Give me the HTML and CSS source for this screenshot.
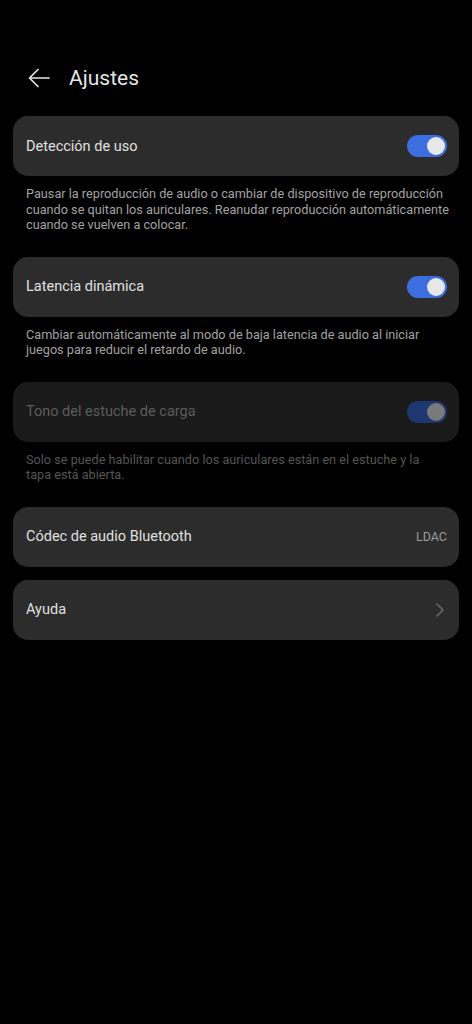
FILE: index.html
```html
<!DOCTYPE html>
<html lang="es">
<head>
  <meta charset="UTF-8">
  <title>Ajustes</title>
  <link rel="stylesheet" href="styles.css">
</head>
<body>
  <div class="page">
    <header class="top">
      <svg class="back" width="24" height="24" viewBox="0 0 24 24">
        <path d="M22 12H2.5M11 3.5L2.5 12L11 20.5" fill="none" stroke="#e6e6e6" stroke-width="1.7" stroke-linecap="round" stroke-linejoin="round"/>
      </svg>
      <h1>Ajustes</h1>
    </header>

    <div class="card">
      <span class="label">Detección de uso</span>
      <span class="switch on"><span class="knob"></span></span>
    </div>
    <p class="hint">Pausar la reproducción de audio o cambiar de dispositivo de reproducción cuando se quitan los auriculares. Reanudar reproducción automáticamente cuando se vuelven a colocar.</p>

    <div class="card">
      <span class="label">Latencia dinámica</span>
      <span class="switch on"><span class="knob"></span></span>
    </div>
    <p class="hint">Cambiar automáticamente al modo de baja latencia de audio al iniciar juegos para reducir el retardo de audio.</p>

    <div class="card disabled">
      <span class="label">Tono del estuche de carga</span>
      <span class="switch on"><span class="knob"></span></span>
    </div>
    <p class="hint dim">Solo se puede habilitar cuando los auriculares están en el estuche y la<br>tapa está abierta.</p>

    <div class="card">
      <span class="label">Códec de audio Bluetooth</span>
      <span class="value">LDAC</span>
    </div>

    <div class="card next">
      <span class="label">Ayuda</span>
      <svg width="10" height="16" viewBox="0 0 10 16">
        <path d="M2 2L8 8L2 14" fill="none" stroke="#6a6a6a" stroke-width="1.6" stroke-linecap="round" stroke-linejoin="round"/>
      </svg>
    </div>
  </div>
</body>
</html>
```

FILE: styles.css
```css
body {
  margin: 0;
  background: #000;
  font-family: Roboto, "Noto Sans", sans-serif;
  color: #e0e0e0;
}
.page {
  padding: 0 13px;
}
.top {
  display: flex;
  align-items: center;
  height: 56px;
  padding-top: 50px;
  margin-bottom: 10px;
}
.back {
  margin-left: 14px;
  margin-right: 18px;
}
.top h1 {
  margin: 0;
  font-size: 21px;
  font-weight: 400;
  color: #e6e6e6;
}
.card {
  display: flex;
  align-items: center;
  justify-content: space-between;
  height: 60px;
  padding: 0 12px 0 13px;
  background: #2c2c2c;
  border-radius: 15px;
}
.card + .card {
  margin-top: 13px;
}
.label {
  font-size: 14.5px;
}
.value {
  font-size: 12.5px;
  color: #9c9c9c;
}
.switch {
  display: flex;
  align-items: center;
  justify-content: flex-end;
  width: 40px;
  height: 22px;
  padding: 0 2px;
  box-sizing: border-box;
  background: #3d6ee0;
  border-radius: 11px;
}
.knob {
  width: 18px;
  height: 18px;
  border-radius: 50%;
  background: #e8e8ea;
}
.hint {
  margin: 10px 2px 24px 13px;
  font-size: 12.7px;
  line-height: 15.5px;
  color: #a3a3a3;
}
.disabled {
  background: #1a1a1a;
}
.disabled .label {
  color: #5c5c5c;
}
.disabled .switch {
  background: #1f3770;
}
.disabled .knob {
  background: #7a7a7a;
}
.hint.dim {
  color: #555;
}
.next svg {
  margin-right: 2px;
}
```
